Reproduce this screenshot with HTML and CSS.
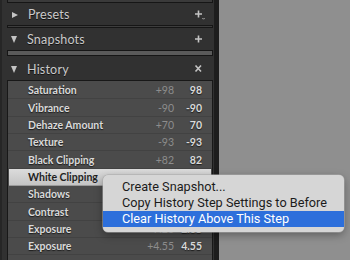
FILE: index.html
```html
<!DOCTYPE html>
<html lang="en">
<head>
  <meta charset="UTF-8">
  <title>History Panel</title>
  <link rel="stylesheet" href="styles.css">
</head>
<body>
  <div class="app">
    <div class="panel">
      <div class="bar bar-end"></div>
      <div class="head">
        <span class="tri tri-right"></span>
        <span class="head-title">Presets</span>
        <svg class="head-icon" width="12" height="10" viewBox="0 0 12 10">
          <path d="M4.5 0.5v7M1 4h7" stroke="#c4c4c4" stroke-width="1.6" fill="none"/>
          <path d="M8.5 8.2l1 1l1-1" stroke="#c4c4c4" stroke-width="1" fill="none"/>
        </svg>
      </div>
      <div class="bar bar-thin"></div>
      <div class="head">
        <span class="tri tri-down"></span>
        <span class="head-title">Snapshots</span>
        <svg class="head-icon" width="12" height="10" viewBox="0 0 12 10">
          <path d="M4.5 0.5v7M1 4h7" stroke="#c4c4c4" stroke-width="1.6" fill="none"/>
        </svg>
      </div>
      <div class="bar bar-empty"></div>
      <div class="head head-history">
        <span class="tri tri-down"></span>
        <span class="head-title">History</span>
        <svg class="head-icon" width="12" height="10" viewBox="0 0 12 10">
          <path d="M1.5 1.5l5.5 6M7 1.5l-5.5 6" stroke="#c4c4c4" stroke-width="1.6" fill="none"/>
        </svg>
      </div>
      <div class="history">
        <div class="row"><span class="name">Saturation</span><span class="delta">+98</span><span class="value">98</span></div>
        <div class="row"><span class="name">Vibrance</span><span class="delta">-90</span><span class="value">-90</span></div>
        <div class="row"><span class="name">Dehaze Amount</span><span class="delta">+70</span><span class="value">70</span></div>
        <div class="row"><span class="name">Texture</span><span class="delta">-93</span><span class="value">-93</span></div>
        <div class="row"><span class="name">Black Clipping</span><span class="delta">+82</span><span class="value">82</span></div>
        <div class="row selected"><span class="name">White Clipping</span><span class="delta"></span><span class="value"></span></div>
        <div class="row"><span class="name">Shadows</span><span class="delta"></span><span class="value"></span></div>
        <div class="row"><span class="name">Contrast</span><span class="delta"></span><span class="value"></span></div>
        <div class="row"><span class="name">Exposure</span><span class="delta">-7.20</span><span class="value">-2.65</span></div>
        <div class="row"><span class="name">Exposure</span><span class="delta">+4.55</span><span class="value">4.55</span></div>
      </div>
    </div>
    <div class="canvas"></div>

    <div class="menu">
      <div class="menu-item">Create Snapshot...</div>
      <div class="menu-item">Copy History Step Settings to Before</div>
      <div class="menu-item active">Clear History Above This Step</div>
    </div>
  </div>
</body>
</html>
```

FILE: styles.css
```css
html, body {
  margin: 0;
  padding: 0;
  height: 100%;
  overflow: hidden;
}
body {
  background: #8f8f8f;
  font-family: Lato, "Liberation Sans", sans-serif;
}
.app {
  position: relative;
  display: flex;
  height: 260px;
}
.panel {
  width: 206px;
  padding: 0 1px 0 5px;
  background: #313131;
  border-left: 2px solid #262626;
  border-right: 5px solid #1d1d1d;
  display: flex;
  flex-direction: column;
}
.canvas {
  flex: 1;
  background: #8f8f8f;
}

/* collapsed / empty panel bars */
.bar {
  border: 1px solid #161616;
  background: #4a4a4a;
}
.bar-end {
  height: 2px;
  border-top: none;
  background: #3a3a3a;
}
.bar-thin {
  height: 1px;
  background: #3d3d3d;
}
.bar-empty {
  height: 4px;
  background: #5a5a5a;
}

.head {
  height: 22px;
  display: flex;
  align-items: center;
  padding: 1px 6px 0 4px;
  box-sizing: border-box;
}
.head-history {
  height: 24px;
  padding-top: 2px;
}
.head-title {
  flex: 1;
  margin-left: 10px;
  font-size: 12.5px;
  color: #cbcbcb;
  letter-spacing: 0.2px;
  text-shadow: 0 1px 0 #111;
}
.head-icon {
  margin-right: 1px;
}
.tri {
  width: 0;
  height: 0;
}
.tri-right {
  border-top: 3.5px solid transparent;
  border-bottom: 3.5px solid transparent;
  border-left: 6px solid #c4c4c4;
  margin-left: 1px;
}
.tri-down {
  border-left: 3.5px solid transparent;
  border-right: 3.5px solid transparent;
  border-top: 7px solid #c4c4c4;
}

.history {
  flex: 1;
  background: #4b4b4b;
  border: 1px solid #181818;
  border-bottom: none;
  padding-top: 1px;
}
.row {
  height: 17.35px;
  box-sizing: border-box;
  display: flex;
  align-items: center;
  padding: 0 10px 0 20px;
  border-bottom: 1px solid #424242;
  font-size: 10.5px;
  font-weight: 700;
  color: #dadada;
  text-shadow: 0 1px 1px #1c1c1c;
}
.row .name {
  flex: 1;
}
.row .delta {
  width: 40px;
  text-align: right;
  font-weight: 400;
  color: #8d8d8d;
  text-shadow: none;
}
.row .value {
  width: 28px;
  text-align: right;
}
.row.selected {
  background: linear-gradient(#dcdcdc, #c4c4c4);
  color: #1e1e1e;
  text-shadow: none;
  border-bottom-color: #9a9a9a;
  margin: 0 1px;
  padding-left: 19px;
}

/* context menu */
.menu {
  position: absolute;
  left: 103px;
  top: 175px;
  width: 241px;
  padding: 4px 0 5px;
  box-sizing: border-box;
  background: #d6d6d6;
  border-radius: 5px;
  box-shadow: 0 0 0 0.5px #a9a9a9, 0 3px 8px rgba(0, 0, 0, 0.35);
  font-family: Roboto, "Liberation Sans", sans-serif;
  font-size: 12.7px;
  color: #1b1b1b;
}
.menu-item {
  height: 16px;
  line-height: 16px;
  padding-left: 19px;
  white-space: nowrap;
}
.menu-item.active {
  background: #2d6fdb;
  color: #fff;
}
```
